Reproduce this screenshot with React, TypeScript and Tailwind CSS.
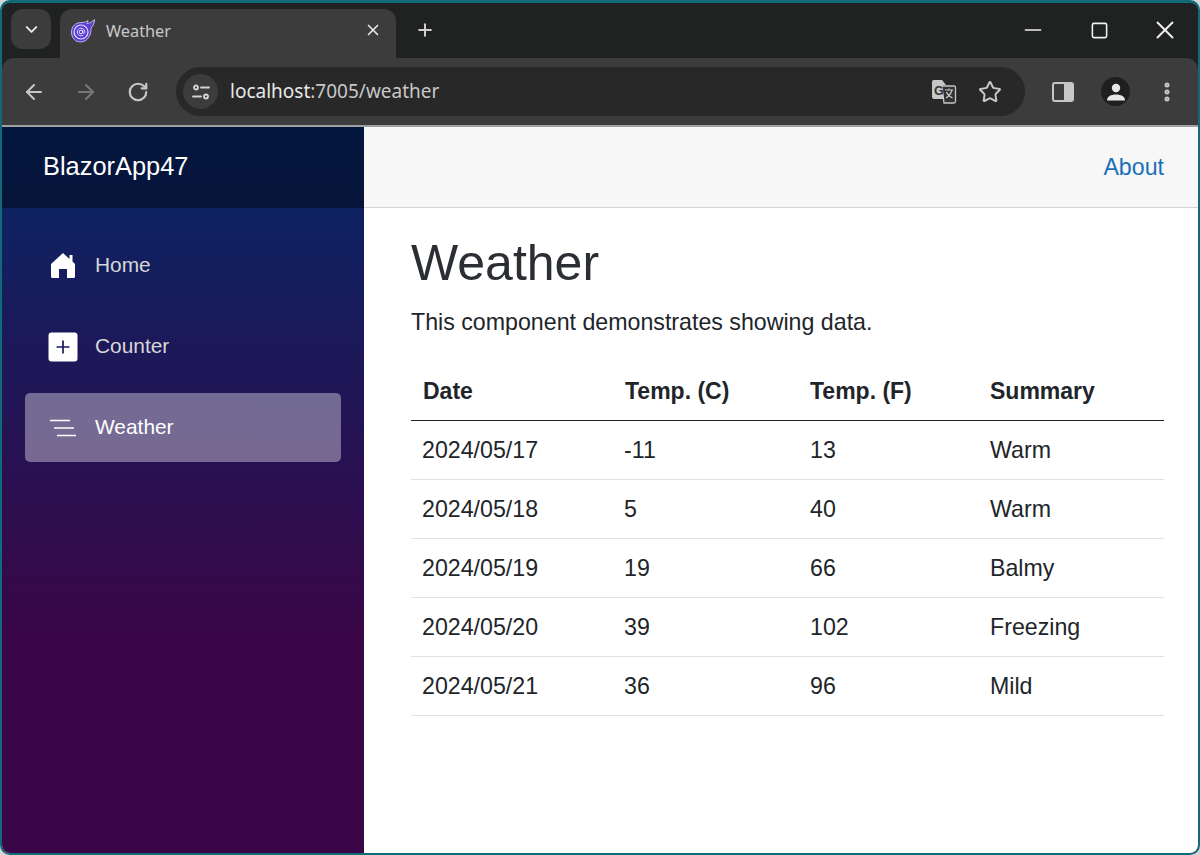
import { ArrowLeft, ArrowRight, ChevronDown, EllipsisVertical, Minus, Plus, RotateCw, Square, Star, X } from 'lucide-react';

const forecasts = [
  { date: '2024/05/17', c: '-11', f: '13', summary: 'Warm' },
  { date: '2024/05/18', c: '5', f: '40', summary: 'Warm' },
  { date: '2024/05/19', c: '19', f: '66', summary: 'Balmy' },
  { date: '2024/05/20', c: '39', f: '102', summary: 'Freezing' },
  { date: '2024/05/21', c: '36', f: '96', summary: 'Mild' },
];

const BlazorLogo = () => (
  <svg width="24" height="24" viewBox="0 0 24 24" fill="none">
    <path d="M0.500 13C0.500 7 5 3.500 10 3.500C13 3.500 15 3 17 1.500C17 3 16.500 3.500 16 4.500C18.500 4.500 21.500 2.500 23.500 0.500C23.500 4 22 7 20 9C20.500 15 17 23 9.500 23C4 23 0.500 18.500 0.500 13Z" fill="#5b3fd6" stroke="#d9d2f7" strokeWidth="0.800" />
    <circle cx="10" cy="13" r="7" stroke="#e6e0fb" strokeWidth="1.200" />
    <circle cx="10" cy="13" r="1.800" stroke="#e6e0fb" strokeWidth="1" />
    <path d="M11.800 11v2.500c0 1.400 2 1.400 2-.5 0-2.100-1.700-3.800-3.800-3.800S6.200 10.900 6.200 13s1.700 3.800 3.800 3.800c.9 0 1.600-.2 2.200-.7" stroke="#e6e0fb" strokeWidth="0.900" />
  </svg>
);

const TuneIcon = () => (
  <svg width="20" height="20" viewBox="0 0 20 20" fill="none" stroke="#d6d6d6" strokeWidth="1.800" strokeLinecap="round">
    <circle cx="5" cy="5.500" r="2" />
    <path d="M10 5.500h8" />
    <circle cx="15" cy="14.500" r="2" />
    <path d="M2 14.500h8" />
  </svg>
);

const TranslateIcon = () => (
  <svg width="26" height="26" viewBox="0 0 26 26" fill="none">
    <path d="M1 3a2 2 0 0 1 2-2h8l4 5h-3l3 14H3a2 2 0 0 1-2-2Z" fill="#c7c7c7" />
    <path d="M11 7h12a1.500 1.500 0 0 1 1.500 1.500v14a1.500 1.500 0 0 1-1.500 1.500H13Z" fill="#333333" stroke="#c7c7c7" strokeWidth="1.300" />
    <text x="3" y="15.500" fontSize="12.500" fontWeight="700" fontFamily="Liberation Sans, sans-serif" fill="#333">G</text>
    <path d="M14 11h8M18 9.500V11M21 11c-1 4-3 6-6 8M15.500 13c1 2.500 3 4.500 6 6" stroke="#c7c7c7" strokeWidth="1.200" />
  </svg>
);

const SidePanelIcon = () => (
  <svg width="22" height="20" viewBox="0 0 22 20">
    <rect x="1" y="1" width="20" height="18" rx="2" fill="none" stroke="#c7c7c7" strokeWidth="2" />
    <rect x="12" y="1" width="9" height="18" rx="1" fill="#c7c7c7" />
  </svg>
);

const ProfileIcon = () => (
  <svg width="20" height="20" viewBox="0 0 20 20" fill="#e8e8e8">
    <circle cx="10" cy="6" r="4.200" />
    <path d="M1 18.500c0-4 4-6 9-6s9 2 9 6Z" />
  </svg>
);

const HomeIcon = () => (
  <svg width="26" height="28" viewBox="0 0 26 28" fill="#ffffff">
    <path d="M13 1L19.500 7V3h3V9.500L25 12V24.500a1.500 1.500 0 0 1-1.500 1.500H17V17H9V26H2.500A1.500 1.500 0 0 1 1 24.500V12Z" />
  </svg>
);

const PlusSquareIcon = () => (
  <svg width="30" height="30" viewBox="0 0 30 30">
    <rect width="29" height="29" x="0.500" y="0.500" rx="3" fill="#ffffff" />
    <path d="M15 8.500v13M8.500 15h13" stroke="#1b1860" strokeWidth="1.700" />
  </svg>
);

const ListIcon = () => (
  <svg width="28" height="18" viewBox="0 0 28 18" stroke="#ffffff" strokeWidth="1.400">
    <path d="M1 1.500h20M5 9h20M8 16.500h19" />
  </svg>
);

function NavItem({ icon, label, active }: { icon: React.ReactNode; label: string; active?: boolean }) {
  return (
    <a className={`flex h-[69px] items-center rounded-[5px] pl-[22px] text-[20.900px] ${active ? 'bg-white/37 text-white' : 'text-[#d7d7d7]'}`}>
      <span className="mr-[16px] flex w-[32px] items-center justify-center">{icon}</span>
      <span className="-mt-px">{label}</span>
    </a>
  );
}

export default function App() {
  return (
    <div className="h-[855px] w-[1200px] overflow-hidden bg-[#d4d4d4] font-['Liberation_Sans',Arial,sans-serif]">
      <div className="flex h-full w-full flex-col overflow-hidden rounded-[10px] border-2 border-t-[3px] border-[#0f6b78] bg-[#202222]">
        <div className="flex h-[56px] shrink-0 pl-[9px] pt-[6px]">
          <div className="flex h-[40px] w-[40px] items-center justify-center rounded-[12px] bg-[#3c3c3c] text-[#e5e5e5]">
            <ChevronDown size={19} strokeWidth={2.500} />
          </div>
          <div className="ml-[9px] flex h-[50px] w-[336px] items-center rounded-t-[12px] bg-[#3c3c3c] pb-[6px] pl-[11px] pr-[14px] text-[#c9c9c9]">
            <BlazorLogo />
            <span className="ml-[11px] flex-1 font-['Noto_Sans',sans-serif] text-[16.300px]">Weather</span>
            <X size={18} strokeWidth={2.200} className="-mt-[3px] text-[#e5e5e5]" />
          </div>
          <div className="ml-[19px] mt-[11px] text-[#d0d0d0]">
            <Plus size={20} strokeWidth={2.400} />
          </div>
          <div className="ml-auto flex h-[42px] items-center text-[#f0f0f0]">
            <div className="flex w-[66px] justify-center"><Minus size={26} strokeWidth={1.500} /></div>
            <div className="flex w-[66px] justify-center"><Square size={19} strokeWidth={2} /></div>
            <div className="flex w-[66px] justify-center"><X size={30} strokeWidth={1.500} /></div>
          </div>
        </div>

        <div className="-mt-px flex h-[67px] shrink-0 items-center rounded-t-[12px] bg-[#3c3c3c] pl-[20px] pr-[12px]">
          <ArrowLeft size={24} strokeWidth={2} className="text-[#c7c7c7]" />
          <ArrowRight size={24} strokeWidth={2} className="ml-[28px] text-[#777777]" />
          <RotateCw size={22} strokeWidth={2.400} className="ml-[29px] text-[#c7c7c7]" />
          <div className="ml-[27px] flex h-[49px] w-[849px] items-center rounded-full bg-[#282828] pl-[7px] pr-[23px]">
            <div className="flex h-[35px] w-[35px] items-center justify-center rounded-full bg-[#3c3c3c]">
              <TuneIcon />
            </div>
            <span className="ml-[12px] flex-1 font-['Noto_Sans',sans-serif] text-[19px] text-[#c7c7c7]">
              <span className="text-[#e8e8e8]">localhost</span>:7005/weather
            </span>
            <TranslateIcon />
            <Star size={24} strokeWidth={2} className="ml-[21px] text-[#c7c7c7]" />
          </div>
          <div className="ml-[27px]"><SidePanelIcon /></div>
          <div className="ml-[27px] flex h-[29px] w-[29px] items-center justify-center rounded-full bg-[#1f1f1f]">
            <ProfileIcon />
          </div>
          <EllipsisVertical size={24} strokeWidth={3} className="ml-[25px] text-[#c7c7c7]" />
        </div>

        <div className="h-[2px] shrink-0 bg-[#a0a0a0]" />

        <div className="flex min-h-0 flex-1 bg-white">
          <aside className="w-[362px] shrink-0 bg-[linear-gradient(180deg,#052767_0%,#3a0647_70%)]">
            <div className="flex h-[81px] items-center bg-black/40 pb-[3px] pl-[41px] text-[25.400px] text-white">BlazorApp47</div>
            <nav className="flex flex-col gap-[12px] pl-[23px] pr-[23px] pt-[23px]">
              <NavItem icon={<HomeIcon />} label="Home" />
              <NavItem icon={<PlusSquareIcon />} label="Counter" />
              <NavItem icon={<ListIcon />} label="Weather" active />
            </nav>
          </aside>

          <main className="min-w-0 flex-1 text-[#212529]">
            <div className="flex h-[81px] items-center justify-end border-b border-[#d6d5d5] bg-[#f7f7f7] pr-[34px] text-[23.200px] text-[#1a70b8]">
              About
            </div>
            <div className="pl-[47px] pr-[34px] pt-[25px]">
              <h1 className="text-[50px] leading-[60px] text-[#2b2e33]">Weather</h1>
              <p className="mt-[12px] text-[23.200px] leading-[35px]">This component demonstrates showing data.</p>
              <table className="mt-[21px] w-[753px] table-fixed border-collapse text-left text-[23.200px]">
                <thead>
                  <tr className="h-[59px] border-b border-[#212529] text-[23px]">
                    <th className="w-[202px] pl-[12px] pt-[2px] font-bold">Date</th>
                    <th className="w-[185px] pl-[12px] pt-[2px] font-bold">Temp. (C)</th>
                    <th className="w-[180px] pl-[12px] pt-[2px] font-bold">Temp. (F)</th>
                    <th className="pl-[12px] pt-[2px] font-bold">Summary</th>
                  </tr>
                </thead>
                <tbody>
                  {forecasts.map((f) => (
                    <tr key={f.date} className="h-[59px] border-b border-[#dee2e6]">
                      <td className="pl-[11px] pt-[2px]">{f.date}</td>
                      <td className="pl-[11px] pt-[2px]">{f.c}</td>
                      <td className="pl-[12px] pt-[2px]">{f.f}</td>
                      <td className="pl-[12px] pt-[2px]">{f.summary}</td>
                    </tr>
                  ))}
                </tbody>
              </table>
            </div>
          </main>
        </div>
      </div>
    </div>
  );
}
